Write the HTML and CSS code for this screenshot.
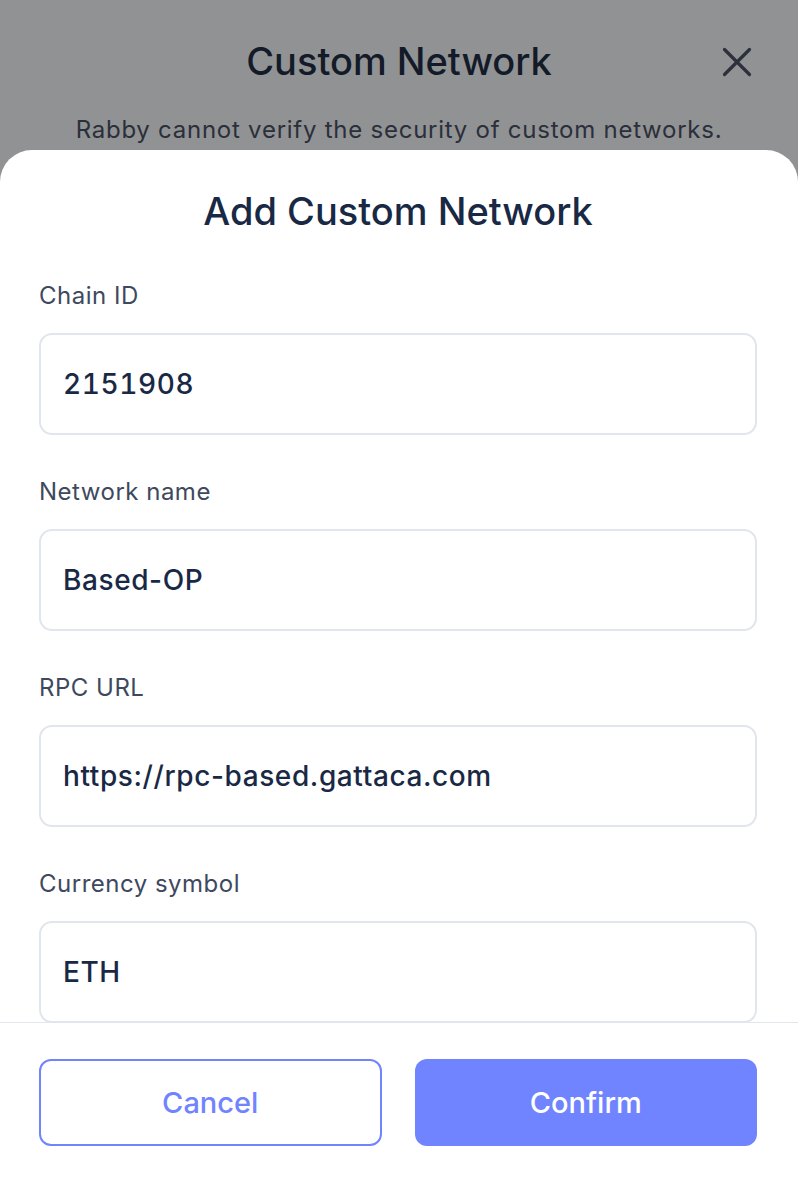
FILE: index.html
```html
<!DOCTYPE html>
<html lang="en">
<head>
<meta charset="utf-8">
<title>Custom Network</title>
<link rel="stylesheet" href="styles.css">
</head>
<body>
<div class="screen">
  <header class="page-header">
    <div class="header-row">
      <h1 class="page-title">Custom Network</h1>
      <button class="close-btn" aria-label="Close">
        <svg width="30" height="30" viewBox="0 0 30 30"><path d="M2.5 2.5 L27.5 27.5 M27.5 2.5 L2.5 27.5" stroke="#2b303b" stroke-width="3.2" stroke-linecap="round" fill="none"/></svg>
      </button>
    </div>
    <p class="page-subtitle">Rabby cannot verify the security of custom networks.</p>
  </header>
  <section class="sheet">
    <div class="sheet-body">
      <h2 class="sheet-title">Add Custom Network</h2>
      <div class="field">
        <label class="field-label">Chain ID</label>
        <div class="field-input field-number">2151908</div>
      </div>
      <div class="field">
        <label class="field-label">Network name</label>
        <div class="field-input">Based-OP</div>
      </div>
      <div class="field">
        <label class="field-label">RPC URL</label>
        <div class="field-input">https://rpc-based.gattaca.com</div>
      </div>
      <div class="field">
        <label class="field-label">Currency symbol</label>
        <div class="field-input">ETH</div>
      </div>
    </div>
    <footer class="sheet-footer">
      <button class="btn btn-outline">Cancel</button>
      <button class="btn btn-primary">Confirm</button>
    </footer>
  </section>
</div>
</body>
</html>
```
FILE: styles.css
```css
* { box-sizing: border-box; }
html, body { margin: 0; padding: 0; }
body {
  background: #919294;
  font-family: Inter, "Noto Sans", sans-serif;
  width: 798px;
  height: 1188px;
  overflow: hidden;
}
.screen {
  display: flex;
  flex-direction: column;
  height: 1188px;
}
.page-header {
  height: 150px;
  padding-top: 38px;
  flex: none;
}
.header-row {
  position: relative;
  display: flex;
  justify-content: center;
  align-items: center;
  height: 46px;
}
.page-title {
  margin: 0;
  font-size: 38px;
  font-weight: 500;
  color: #131a28;
  letter-spacing: 0;
  line-height: 46px;
}
.close-btn {
  position: absolute;
  right: 46px;
  top: 9px;
  width: 30px;
  height: 30px;
  padding: 0;
  border: 0;
  background: none;
  display: flex;
}
.page-subtitle {
  margin: 30px 0 0;
  text-align: center;
  font-size: 24px;
  line-height: 32px;
  letter-spacing: 0.75px;
  color: #2a2f3a;
}
.sheet {
  flex: 1;
  background: #fff;
  border-radius: 32px 32px 0 0;
  display: flex;
  flex-direction: column;
  overflow: hidden;
}
.sheet-body {
  flex: 1;
  overflow: hidden;
  padding: 39px 41px 0 39px;
}
.sheet-title {
  margin: 0 0 47px;
  text-align: center;
  font-size: 38px;
  font-weight: 500;
  line-height: 44px;
  color: #192945;
  letter-spacing: 0;
}
.field { margin-bottom: 41px; }
.field-label {
  display: block;
  font-size: 24px;
  line-height: 32px;
  letter-spacing: 0.5px;
  color: #3e495e;
  margin-bottom: 21px;
}
.field-input {
  height: 102px;
  border: 2px solid #e1e5ec;
  border-radius: 13px;
  padding: 0 22px;
  display: flex;
  align-items: center;
  font-size: 28px;
  font-weight: 500;
  letter-spacing: 0.6px;
  color: #192945;
}
.field-number {
  font-variant-numeric: tabular-nums;
  letter-spacing: 0.6px;
}
.sheet-footer {
  flex: none;
  height: 166px;
  border-top: 1px solid #e1e5ec;
  padding: 36px 41px 0 39px;
  display: grid;
  grid-template-columns: 1fr 1fr;
  column-gap: 33px;
  align-items: start;
}
.btn {
  width: 100%;
  height: 87px;
  border-radius: 12px;
  font-family: Inter, "Noto Sans", sans-serif;
  font-size: 29px;
  font-weight: 500;
  padding: 0;
}
.btn-outline {
  background: #fff;
  border: 2px solid #7084ff;
  color: #7084ff;
}
.btn-primary {
  background: #7084ff;
  border: 0;
  color: #fff;
}
```
